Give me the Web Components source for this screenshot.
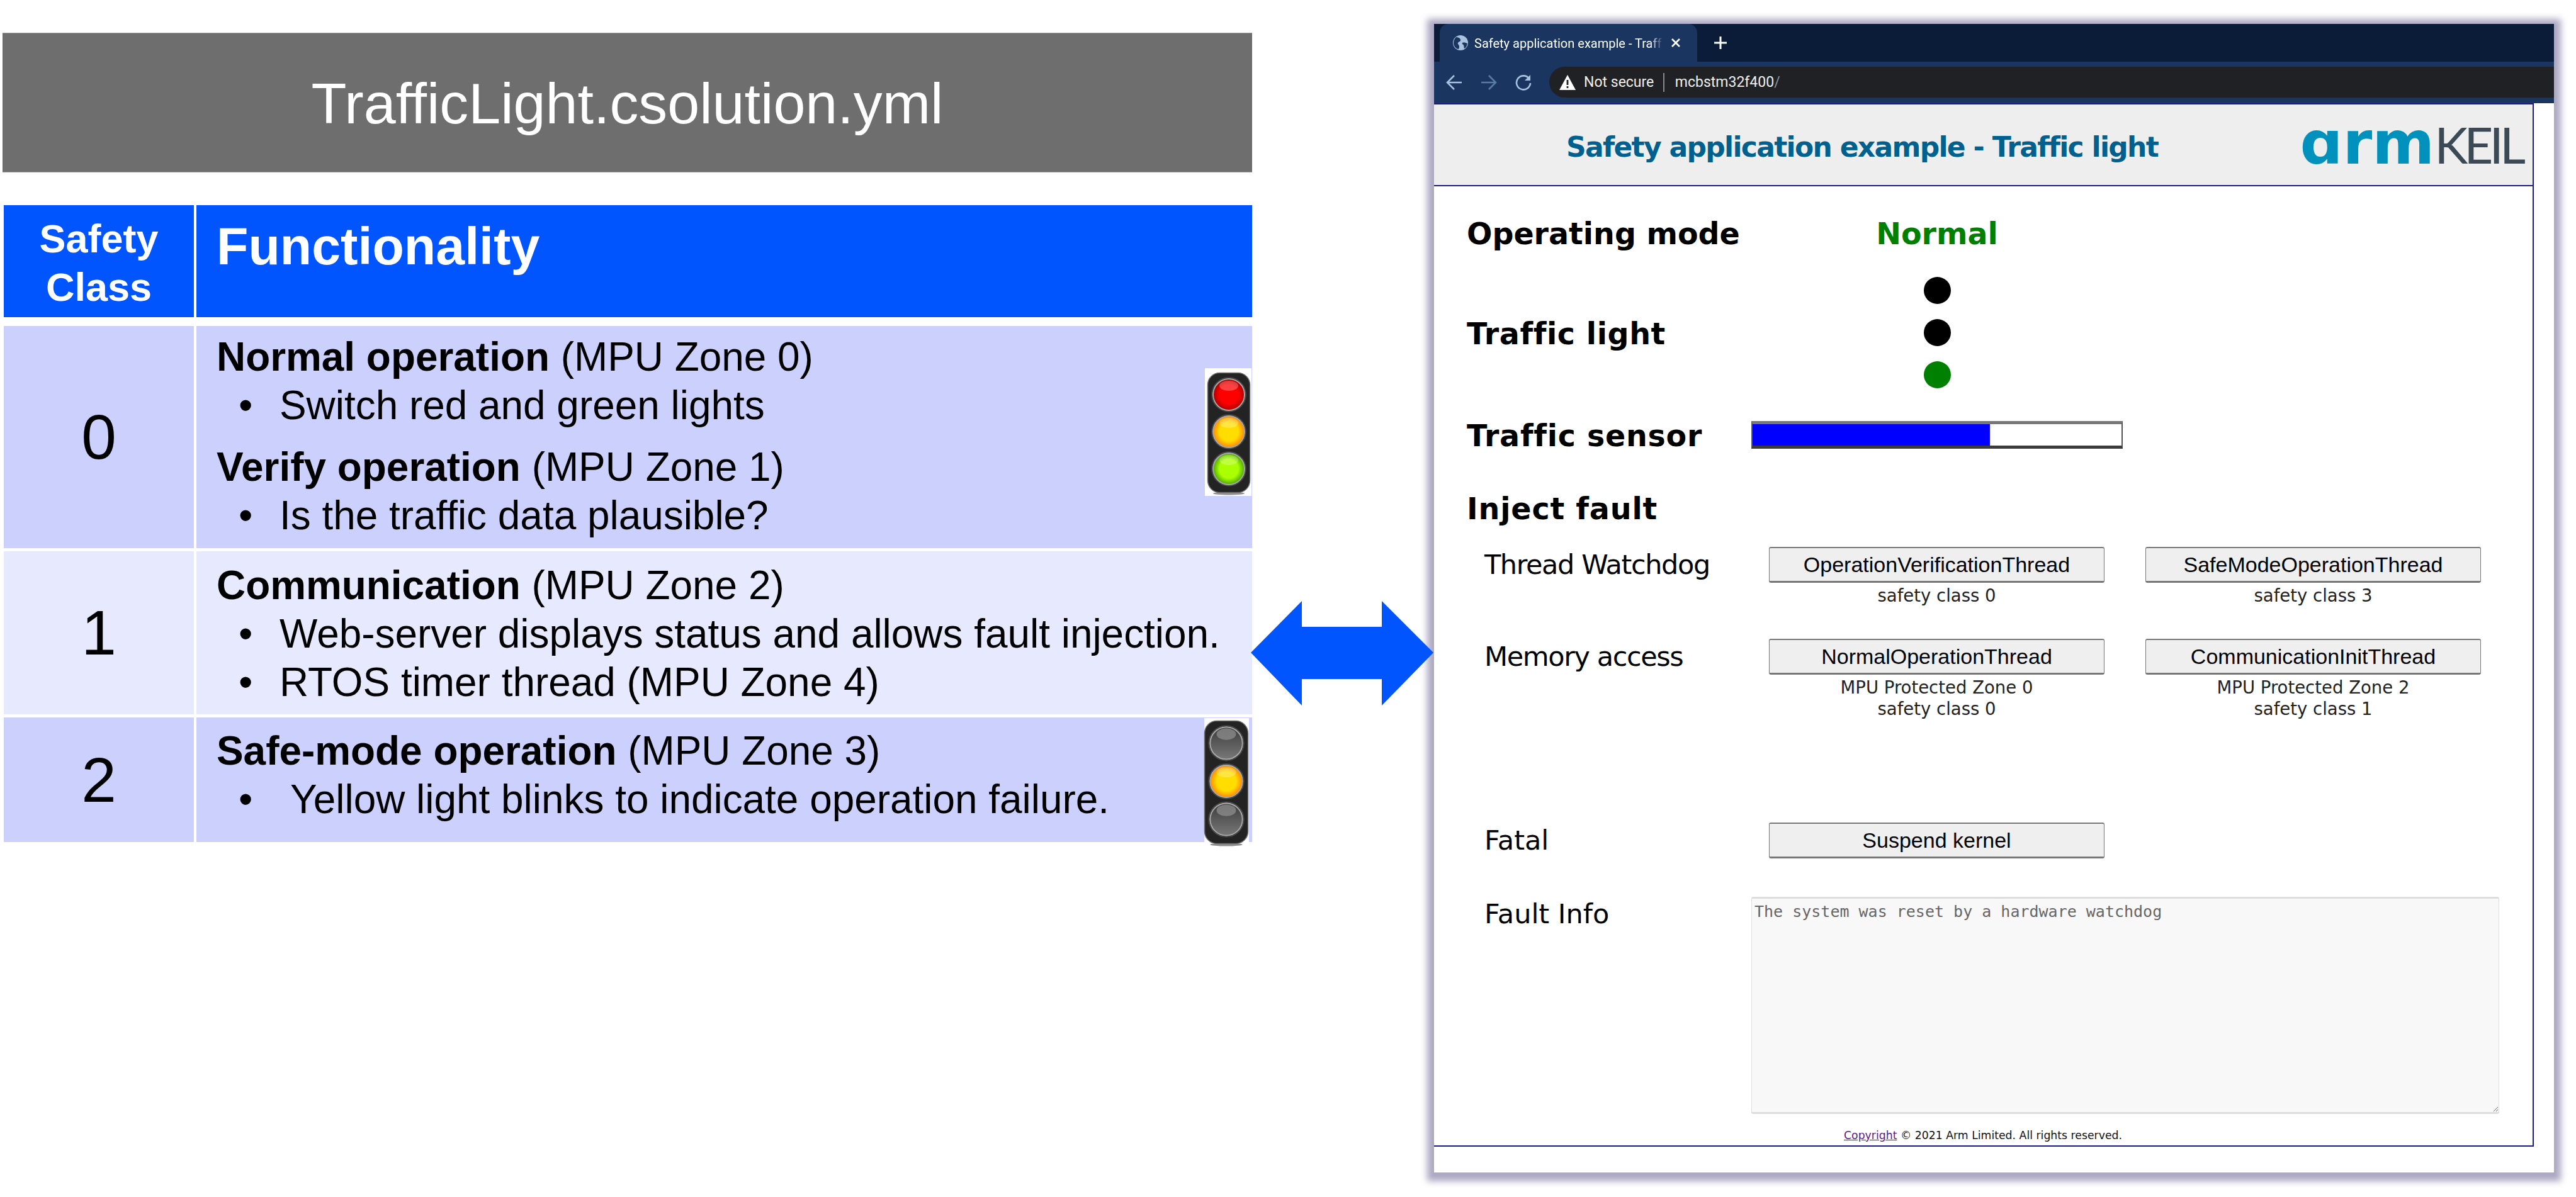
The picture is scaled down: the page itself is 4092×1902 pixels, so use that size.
<!DOCTYPE html>
<html>
<head>
<meta charset="utf-8">
<title>TrafficLight</title>
<style>
  html, body { margin: 0; background: #fff; }
  body { width: 4092px; height: 1902px; overflow: hidden; font-family: "Liberation Sans", sans-serif; }
</style>
</head>
<body>
<slide-page>
  <slide-left slot="left">
    <safety-row slot="rows" number="0" tone="dark" pad="11" height="353">
      <row-line><b>Normal operation</b> (MPU Zone 0)</row-line>
      <row-line bullet>Switch red and green lights</row-line>
      <row-line gap="21"><b>Verify operation</b> (MPU Zone 1)</row-line>
      <row-line bullet>Is the traffic data plausible?</row-line>
      <traffic-light state="all" style="right:1px;top:67px"></traffic-light>
    </safety-row>
    <safety-row slot="rows" number="1" tone="light" pad="16" height="259">
      <row-line><b>Communication</b> (MPU Zone 2)</row-line>
      <row-line bullet>Web-server displays status and allows fault injection.</row-line>
      <row-line bullet>RTOS timer thread (MPU Zone 4)</row-line>
    </safety-row>
    <safety-row slot="rows" number="2" tone="dark" pad="15" height="198">
      <row-line><b>Safe-mode operation</b> (MPU Zone 3)</row-line>
      <row-line bullet indent="17">Yellow light blinks to indicate operation failure.</row-line>
      <traffic-light state="safe" style="right:5px;top:1px"></traffic-light>
    </safety-row>
  </slide-left>
  <double-arrow slot="arrow"></double-arrow>
  <browser-window slot="window">
    <safety-page></safety-page>
  </browser-window>
</slide-page>

<script>
class BaseElement extends HTMLElement {
  constructor() {
    super()
    this.attachShadow({ mode: 'open' })
  }
  connectedCallback() {
    this.render()
  }
  get css() { return '' }
  get html() { return '' }
  render() {
    this.shadowRoot.innerHTML = `<style>${this.css}</style>${this.html}`
  }
}

class SlidePage extends BaseElement {
  get css() {
    return `
      :host { display: flex; width: 4092px; height: 1902px; }
      .left { width: 1985px; margin-left: 4px; }
      .arrow { width: 289px; padding-top: 955px; box-sizing: border-box; position: relative; z-index: 1; }
      .window { margin-top: 38px; }
    `
  }
  get html() {
    return `
      <div class="left"><slot name="left"></slot></div>
      <div class="arrow"><slot name="arrow"></slot></div>
      <div class="window"><slot name="window"></slot></div>
    `
  }
}

class SlideLeft extends BaseElement {
  get css() {
    return `
      :host { display: block; padding-top: 52px; font-family: "Liberation Sans", sans-serif; }
      .title {
        height: 222px; box-sizing: border-box; background: #6e6e6e; color: #fff;
        border-top: 1px solid #999; border-bottom: 1px solid #999; padding-top: 3px;
        display: flex; align-items: center; justify-content: center;
        font-size: 91.7px;
      }
      .table { margin: 52px 0 0 2px; display: flex; flex-direction: column; gap: 5px; }
      .head {
        display: grid; grid-template-columns: 302px 1fr; column-gap: 4px;
        height: 178px; margin-bottom: 9px; color: #fff; font-weight: bold;
      }
      .head div { background: #0055ff; }
      .cls { font-size: 63px; line-height: 77px; text-align: center; padding-top: 15px; box-sizing: border-box; }
      .fn { font-size: 82.5px; line-height: 90px; padding: 20px 0 0 32px; box-sizing: border-box; }
    `
  }
  get html() {
    return `
      <div class="title">TrafficLight.csolution.yml</div>
      <div class="table">
        <div class="head">
          <div class="cls">Safety<br>Class</div>
          <div class="fn">Functionality</div>
        </div>
        <slot name="rows"></slot>
      </div>
    `
  }
}

class SafetyRow extends BaseElement {
  get css() {
    const bg = this.getAttribute('tone') === 'dark' ? '#cbd0fd' : '#e7e9fe'
    return `
      :host {
        display: grid; grid-template-columns: 302px 1fr; column-gap: 4px;
        height: ${this.getAttribute('height')}px; position: relative; color: #000;
      }
      .num {
        background: ${bg}; font-size: 100px;
        display: flex; align-items: center; justify-content: center;
      }
      .body {
        background: ${bg}; padding: ${this.getAttribute('pad')}px 0 0 32px;
        font-size: 63.9px; line-height: 77px;
      }
    `
  }
  get html() {
    return `
      <div class="num">${this.getAttribute('number')}</div>
      <div class="body"><slot></slot></div>
    `
  }
}

class RowLine extends BaseElement {
  get css() {
    const gap = this.getAttribute('gap') || 0
    const indent = Number(this.getAttribute('indent')) || 0
    return `
      :host { display: block; margin-top: ${gap}px; white-space: nowrap; }
      .line { display: flex; }
      .dot { width: ${100 + indent}px; padding-left: 35px; box-sizing: border-box; }
    `
  }
  get html() {
    if (this.hasAttribute('bullet')) {
      return `<div class="line"><span class="dot">•</span><span><slot></slot></span></div>`
    }
    return `<slot></slot>`
  }
}

class TrafficLight extends BaseElement {
  lamp(id, cy, c1, c2, on) {
    if (!on) {
      return `
        <circle cx="34" cy="${cy}" r="25" fill="url(#off)" stroke="#a8a8a8" stroke-width="2"/>
        <circle cx="34" cy="${cy}" r="27" fill="none" stroke="#4a4a4a" stroke-width="1.5"/>
        <ellipse cx="34" cy="${cy - 14}" rx="15" ry="9" fill="#8a8a8a" opacity=".8"/>
      `
    }
    return `
      <radialGradient id="${id}" cx=".5" cy=".5" r=".5">
        <stop offset=".6" stop-color="${c1}"/><stop offset="1" stop-color="${c2}"/>
      </radialGradient>
      <circle cx="34" cy="${cy}" r="25" fill="url(#${id})" stroke="#a8a8a8" stroke-width="2"/>
      <circle cx="34" cy="${cy}" r="27" fill="none" stroke="#4a4a4a" stroke-width="1.5"/>
      <ellipse cx="34" cy="${cy - 14}" rx="15" ry="8" fill="#fff" opacity=".25"/>
    `
  }
  get css() {
    const safe = this.getAttribute('state') === 'safe'
    return `
      :host { position: absolute; display: block; width: ${safe ? 71 : 74}px; height: ${safe ? 197 : 203}px; background: #fff; }
      svg { position: absolute; left: ${safe ? 0 : 4}px; top: ${safe ? 4 : 7}px; overflow: visible; }
    `
  }
  get html() {
    const safe = this.getAttribute('state') === 'safe'
    return `
      <svg width="${safe ? 70 : 68}" height="${safe ? 196 : 191}" viewBox="0 0 68 191" preserveAspectRatio="none">
        <defs>
          <linearGradient id="off" x1="0" y1="0" x2="0" y2="1">
            <stop offset="0" stop-color="#3c3c3c"/><stop offset="1" stop-color="#787878"/>
          </linearGradient>
        </defs>
        <ellipse cx="34" cy="192" rx="25" ry="2.5" fill="#444" opacity=".6"/>
        <rect x="0.5" y="0.5" width="67" height="190" rx="19" fill="#232323" stroke="#6e6e6e" stroke-width="1.5"/>
        ${this.lamp('r', 35, '#ff0000', '#a80000', !safe)}
        ${this.lamp('a', 94, '#ffdd00', '#ff8800', true)}
        ${this.lamp('g', 153, '#aaff00', '#4aa800', !safe)}
      </svg>
    `
  }
}

class DoubleArrow extends BaseElement {
  get css() {
    return `:host { display: block; margin-left: -2px; height: 166px; }
      svg { display: block; }`
  }
  get html() {
    return `
      <svg width="290" height="166" viewBox="0 0 290 166">
        <polygon fill="#0055ff" points="0,82 81,0 81,41 208,41 208,0 290,82 208,166 208,124 81,124 81,166"/>
      </svg>
    `
  }
}

class BrowserWindow extends BaseElement {
  get css() {
    return `
      :host {
        display: block; width: 1779px; height: 1825px; background: #fff;
        box-shadow: 0 3px 10px 11px #aea9c3; font-family: Roboto, sans-serif;
      }
      .strip { height: 60px; background: #0b1c38; display: flex; padding-left: 9px; color: #fff; }
      .tab {
        width: 409px; height: 60px; background: #1a3560; border-radius: 14px 14px 0 0;
        display: flex; align-items: center; box-sizing: border-box; padding-left: 21px;
      }
      .tab .name {
        width: 300px; margin-left: 10px; font-size: 20px; white-space: nowrap; padding-top: 2px;
        -webkit-mask-image: linear-gradient(to right, #000 93%, transparent);
      }
      .plus { margin: 0 0 0 26px; display: flex; align-items: center; }
      .tools {
        height: 66px; background: #1a3560; display: flex; align-items: center;
        position: relative;
      }
      .tools .ic { display: flex; width: 55px; justify-content: center; }
      .addr {
        margin-left: 14px; flex: 1; height: 49px; margin-top: -1px;
        background: #202124; border-radius: 25px 0 0 25px; display: flex; align-items: center;
        color: #eee; font-size: 23px;
      }
      .addr svg { margin-left: 16px; }
      .addr .ns { margin-left: 13px; }
      .addr .sep { width: 1.5px; height: 30px; background: #8a8a8a; margin: 0 17px 0 15px; }
      .addr .dim { color: #8a94a0; }
      ::slotted(*) { display: block; }
    `
  }
  get html() {
    return `
      <div class="strip">
        <div class="tab">
          <svg width="24" height="24" viewBox="0 0 24 24">
            <circle cx="12" cy="12" r="12" fill="#a9c0df"/>
            <path d="M5 3c3 0 6 1 7 4s-3 3-4 5 2 3 2 6-1 4-2 4C3 20 1 16 1 12c0-4 2-7 4-9zM15 12c3-1 5 0 8 1-1 4-2 7-5 8-1-2 0-3-1-5s-3-2-2-4z" fill="#1a3560"/>
          </svg>
          <span class="name">Safety application example - Traff</span>
          <svg width="16" height="16" viewBox="0 0 16 16" style="margin-left:12px"><path d="M2 2L14 14M14 2L2 14" stroke="#fff" stroke-width="2.6"/></svg>
        </div>
        <div class="plus">
          <svg width="22" height="22" viewBox="0 0 22 22"><path d="M11 1V21M1 11H21" stroke="#fff" stroke-width="3"/></svg>
        </div>
      </div>
      <div class="tools">
        <span class="ic" style="margin-left:4px">
          <svg width="26" height="26" viewBox="0 0 26 26"><path d="M25 13H3M13 2L2 13L13 24" fill="none" stroke="#a9c0df" stroke-width="2.6"/></svg>
        </span>
        <span class="ic">
          <svg width="26" height="26" viewBox="0 0 26 26"><path d="M1 13H23M13 2L24 13L13 24" fill="none" stroke="#587ba6" stroke-width="2.6"/></svg>
        </span>
        <span class="ic">
          <svg width="26" height="26" viewBox="0 0 26 26"><path d="M22 7A11 11 0 1 0 24 14" fill="none" stroke="#a9c0df" stroke-width="2.6"/><path d="M24 1V10H15Z" fill="#a9c0df"/></svg>
        </span>
        <div class="addr">
          <svg width="26" height="24" viewBox="0 0 26 24"><path d="M13 0L26 24H0Z" fill="#fff"/><path d="M11.600 8h2.800v8h-2.800zM11.600 18h2.800v3h-2.800z" fill="#202124"/></svg>
          <span class="ns">Not secure</span>
          <span class="sep"></span>
          <span>mcbstm32f400<span class="dim">/</span></span>
        </div>
      </div>
      <slot></slot>
    `
  }
}

class SafetyPage extends BaseElement {
  get css() {
    return `
      :host {
        display: block; width: 1747px; height: 1658px; box-sizing: border-box;
        border: 2.5px solid #1a1a8c; border-left: 0; border-right-width: 2px;
        font-family: "DejaVu Sans", sans-serif; color: #000;
      }
      .top {
        height: 128px; background: #eee; border-bottom: 2.5px solid #1a1a8c;
        display: flex; box-sizing: content-box; position: relative;
      }
      .top h1 {
        margin: 41px 0 0 210px; font-size: 44px; line-height: 54px; font-weight: bold;
        color: #00618f; white-space: nowrap; letter-spacing: -1.7px;
      }
      .logo { margin: 6px 17px 0 auto; display: flex; align-items: baseline; height: 110px; }
      .arm { font-size: 95px; line-height: 110px; font-weight: bold; color: #0091bd; }
      .keil { font-family: Lato, sans-serif; font-size: 80px; color: #3c4a56; margin-left: 0; letter-spacing: -6px; }
      .main { padding: 46px 0 0 52px; }
      .status { display: grid; grid-template-columns: 452px 590px; align-items: center; font-size: 47.5px; font-weight: bold; }
      .status > :nth-child(2) { justify-self: stretch; text-align: center; }
      .mode { height: 60px; line-height: 60px; }
      .lights { height: 179px; margin-top: 37px; }
      .lights > span { padding-top: 3px; letter-spacing: .6px; }
      .dots { display: flex; flex-direction: column; align-items: center; gap: 24px; }
      .dots i { width: 43px; height: 43px; border-radius: 50%; background: #000; display: block; }
      .dots i.on { background: #008000; }
      .sensor { height: 44px; margin-top: 44px; }
      .sensor > span { padding-top: 3px; letter-spacing: .75px; }
      .bar {
        height: 44px; box-sizing: border-box; background: #fff;
        border: 2px solid #555; border-top: 5px solid #777; border-bottom: 5px solid #3a3a3a;
      }
      .bar div { height: 100%; width: 64.3%; background: #00f; }
      h2 { font-size: 47.5px; line-height: 60px; margin: 73px 0 0 0; letter-spacing: .85px; }
      .faults { margin-top: 30px; padding-left: 28px; }
    `
  }
  get html() {
    return `
      <div class="top">
        <h1>Safety application example - Traffic light</h1>
        <div class="logo"><span class="arm">ɑrm</span><span class="keil">KEIL</span></div>
      </div>
      <div class="main">
        <div class="status mode"><span>Operating mode</span><span style="color:#008000">Normal</span></div>
        <div class="status lights"><span>Traffic light</span><div class="dots"><i></i><i></i><i class="on"></i></div></div>
        <div class="status sensor"><span>Traffic sensor</span><div class="bar"><div></div></div></div>
        <h2>Inject fault</h2>
        <div class="faults">
          <fault-row label="Thread Watchdog" spacing="-1.4" height="146">
            <fault-button label="OperationVerificationThread">safety class 0</fault-button>
            <fault-button label="SafeModeOperationThread">safety class 3</fault-button>
          </fault-row>
          <fault-row label="Memory access" spacing="-1.4" height="292">
            <fault-button label="NormalOperationThread">MPU Protected Zone 0<br>safety class 0</fault-button>
            <fault-button label="CommunicationInitThread">MPU Protected Zone 2<br>safety class 1</fault-button>
          </fault-row>
          <fault-row label="Fatal" height="118">
            <fault-button label="Suspend kernel"></fault-button>
          </fault-row>
          <fault-info></fault-info>
        </div>
        <page-footer></page-footer>
      </div>
    `
  }
}

class FaultRow extends BaseElement {
  get css() {
    return `
      :host {
        display: grid; grid-template-columns: 387px 533px 533px; column-gap: 65px;
        height: ${this.getAttribute('height')}px; align-items: start;
      }
      .label { font-size: 43px; line-height: 57px; white-space: nowrap; letter-spacing: ${this.getAttribute('spacing') || 0}px; }
    `
  }
  get html() {
    return `<div class="label">${this.getAttribute('label')}</div><slot></slot>`
  }
}

class FaultButton extends BaseElement {
  get css() {
    return `
      :host { display: block; text-align: center; font-size: 27.5px; line-height: 34px; color: #222; white-space: nowrap; }
      button {
        display: block; width: 100%; height: 57px; box-sizing: border-box; margin: 0 0 3px; padding: 0;
        background: #efefef; border: 1.5px solid #777; border-top-width: 2px; border-bottom-width: 3px;
        border-radius: 3px; font: 34px "Liberation Sans", sans-serif; color: #000;
      }
    `
  }
  get html() {
    return `<button>${this.getAttribute('label')}</button><slot></slot>`
  }
}

class FaultInfo extends BaseElement {
  get css() {
    return `
      :host { display: grid; grid-template-columns: 424px 1188px; }
      .label { font-size: 43px; line-height: 54px; }
      textarea {
        display: block; width: 1188px; height: 345px; box-sizing: border-box; margin: 0;
        background: #f8f8f8; border: 1px solid #ddd; border-top-width: 3px; border-bottom-width: 3px;
        border-radius: 3px; padding: 6px 0 0 4px; color: #666; outline: 0;
        font: 25px/29px "DejaVu Sans Mono", monospace;
      }
    `
  }
  get html() {
    return `<div class="label">Fault Info</div><textarea readonly>The system was reset by a hardware watchdog</textarea>`
  }
}

class PageFooter extends BaseElement {
  get css() {
    return `
      :host { display: block; margin: 22px 0 0 599px; font-size: 17.3px; line-height: 24px; white-space: nowrap; color: #111; }
      a { color: #551a8b; }
    `
  }
  get html() {
    return `<a href="#">Copyright</a> © 2021 Arm Limited. All rights reserved.`
  }
}

window.customElements.define('slide-page', SlidePage)
window.customElements.define('slide-left', SlideLeft)
window.customElements.define('safety-row', SafetyRow)
window.customElements.define('row-line', RowLine)
window.customElements.define('traffic-light', TrafficLight)
window.customElements.define('double-arrow', DoubleArrow)
window.customElements.define('browser-window', BrowserWindow)
window.customElements.define('safety-page', SafetyPage)
window.customElements.define('fault-row', FaultRow)
window.customElements.define('fault-button', FaultButton)
window.customElements.define('fault-info', FaultInfo)
window.customElements.define('page-footer', PageFooter)
</script>
</body>
</html>
